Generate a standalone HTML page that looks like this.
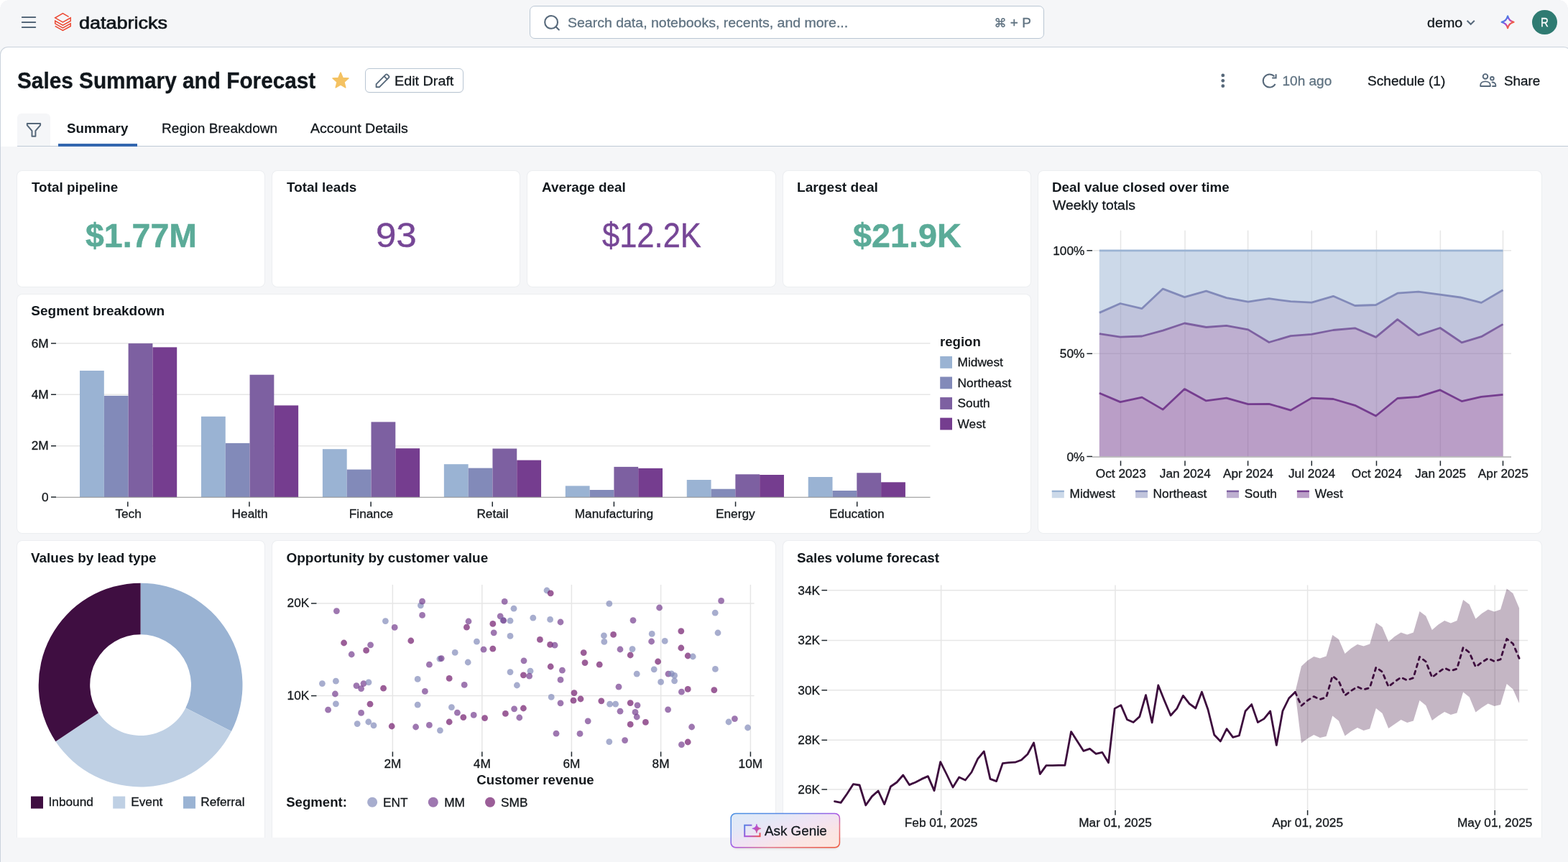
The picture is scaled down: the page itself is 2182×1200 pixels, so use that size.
<!DOCTYPE html>
<html lang="en"><head><meta charset="utf-8"><title>Sales Summary and Forecast</title>
<style>
html,body{margin:0;padding:0}
body{width:2182px;height:1200px;overflow:hidden;position:relative;background:#f5f6f8;font-family:"Liberation Sans",sans-serif;color:#11171c;-webkit-font-smoothing:antialiased}
.t{position:absolute;white-space:nowrap;margin:0;padding:0;display:block;transform-origin:0 50%;-webkit-text-stroke:.3px currentColor}
.t.b{-webkit-text-stroke:0}
.abs{position:absolute}
#root{position:absolute;left:0;top:0;width:2182px;height:1200px;overflow:hidden;will-change:transform}
#panel{position:absolute;left:0;top:65px;width:2187px;height:1140px;box-sizing:border-box;background:#fff;border:1px solid #cad2dc;border-bottom:0;border-radius:11px 11px 0 0}
#canvas{position:absolute;left:1px;top:204px;width:2181px;height:962px;background:#f5f6f8;overflow:hidden}
.card{position:absolute;background:#fff;border-radius:7px;box-shadow:0 0 0 1px #eceef1;overflow:hidden}
.card svg{position:absolute;left:0;top:0;display:block}
svg text{font-family:"Liberation Sans",sans-serif;fill:#14181c;stroke:#14181c;stroke-width:.3px}
svg text[font-weight]{stroke:none}
#search{position:absolute;left:737px;top:8px;width:716px;height:46px;box-sizing:border-box;background:#fff;border:1px solid #b9c6d3;border-radius:7px}
#edit{position:absolute;left:508px;top:95px;width:137px;height:34px;box-sizing:border-box;background:#fff;border:1px solid #b9c6d3;border-radius:6px;box-shadow:0 1px 1px rgba(0,0,0,.04)}
#filter{position:absolute;left:24px;top:158px;width:46px;height:45px;background:#f5f6f8;border-radius:6px 6px 0 0}
#tabline{position:absolute;left:24px;top:203px;width:2158px;height:1px;background:#bfcad6}
#tabsel{position:absolute;left:81px;top:200px;width:110px;height:4px;background:#3367af}
#avatar{position:absolute;left:2132.4px;top:13.7px;width:34.6px;height:34.6px;border-radius:50%;background:#2f7b72}
</style></head>
<body>
<div id="root">
<div id="topbar">
<div class="abs" style="left:0;top:0;width:12px;height:12px;background:radial-gradient(circle at 12px 12px,rgba(255,255,255,0) 11.5px,#fff 12px)"></div>
<div class="abs" style="left:2170px;top:0;width:12px;height:12px;background:radial-gradient(circle at 0 12px,rgba(255,255,255,0) 11.5px,#fff 12px)"></div>
<svg class="abs" style="left:28px;top:20px" width="24" height="22" viewBox="28 20 24 22"><g stroke="#56687a" stroke-width="2" stroke-linecap="round"><path d="M30.8 24h18.4M30.8 31.1h18.4M30.8 38.1h18.4"/></g></svg>
<svg class="abs" style="left:74px;top:16px" width="28" height="29" viewBox="74 16 28 29"><path d="M95.6 23.4L87.4 18.7L76.7 24.8L87.4 30.9L98.2 24.8V29.2L87.4 35.2L76.7 29.1V32.9L87.4 38.9L98.2 32.8V36.5L87.4 42.5L76.7 36.3" fill="none" stroke="#ec4630" stroke-width="1.45" stroke-linejoin="miter"/></svg>
<span class="t" style="left:109.77px;top:17px;font-size:24.5px;line-height:30px;color:#10161b;transform:scaleX(1.1025);-webkit-text-stroke:0.7px #10161b;">databricks</span>
<div id="search"></div>
<svg class="abs" style="left:754px;top:18px" width="28" height="28" viewBox="754 18 28 28"><g fill="none" stroke="#56687a" stroke-width="2.1" stroke-linecap="round"><circle cx="767.1" cy="30.9" r="8.9"/><path d="M773.6 37.3l4.2 4.2"/></g></svg>
<span class="t" style="left:789.52px;top:20px;font-size:19px;line-height:23px;color:#5f7281;transform:scaleX(1.0261);">Search data, notebooks, recents, and more...</span>
<span class="t" style="left:1383.5px;top:20px;font-size:19px;line-height:23px;color:#5f7281;"><span style="font-family:'DejaVu Sans',sans-serif;font-size:17px">⌘</span> + P</span>
<span class="t" style="left:1986.17px;top:20px;font-size:19px;line-height:23px;transform:scaleX(1.0360);">demo</span>
<svg class="abs" style="left:2038px;top:24px" width="18" height="14" viewBox="2038 24 18 14"><path d="M2041.6 28.7l5.1 5.1l5.1-5.1" fill="none" stroke="#56687a" stroke-width="2"/></svg>
<svg class="abs" style="left:2086px;top:18px" width="26" height="26" viewBox="2086 18 26 26"><defs><linearGradient id="sg" gradientUnits="userSpaceOnUse" x1="2093.85" y1="26.5" x2="2102.35" y2="35"><stop offset="0" stop-color="#4a80e2"/><stop offset=".25" stop-color="#6a62e2"/><stop offset=".5" stop-color="#ab44d8"/><stop offset=".72" stop-color="#dc4c7c"/><stop offset="1" stop-color="#f2603e"/></linearGradient></defs>
<path d="M2098.1 22.3C2099.6 27.45 2101.4 29.25 2106.55 30.75C2101.4 32.25 2099.6 34.05 2098.1 39.2C2096.6 34.05 2094.8 32.25 2089.65 30.75C2094.8 29.25 2096.6 27.45 2098.1 22.3Z" fill="none" stroke="url(#sg)" stroke-width="2.2" stroke-linejoin="round"/></svg>
<div id="avatar"></div>
<span class="t" style="left:2144.17px;top:21px;font-size:17px;line-height:21px;color:#ffffff;transform:scaleX(0.8814);">R</span>
</div>
<div id="panel"></div>
<div id="header">
<span class="t b" style="left:23.77px;top:93px;font-size:31.5px;line-height:38px;font-weight:700;transform:scaleX(0.9450);-webkit-text-stroke:.35px #11171c;">Sales Summary and Forecast</span>
<svg class="abs" style="left:460px;top:98px" width="28" height="28" viewBox="460 98 28 28"><polygon points="474,101 477.06,108.39 485.03,109.02 478.95,114.21 480.82,121.98 474,117.8 467.18,121.98 469.05,114.21 462.97,109.02 470.94,108.39" fill="#f4c262" stroke="#f4c262" stroke-width="1.5" stroke-linejoin="round"/></svg>
<div id="edit"></div>
<svg class="abs" style="left:520px;top:100px" width="26" height="26" viewBox="520 100 26 26"><g fill="none" stroke="#56687a" stroke-width="1.9" stroke-linejoin="round" stroke-linecap="round"><path d="M523.6 121.3v-4.2l13.2-13.2a1.6 1.6 0 0 1 2.3 0l1.9 1.9a1.6 1.6 0 0 1 0 2.3l-13.2 13.2z"/><path d="M534.6 106.2l4.2 4.2"/></g></svg>
<span class="t" style="left:549.08px;top:101px;font-size:19px;line-height:23px;transform:scaleX(1.0400);">Edit Draft</span>
<svg class="abs" style="left:1696px;top:100px" width="12" height="24" viewBox="1696 100 12 24"><g fill="#56687a"><circle cx="1701.8" cy="104.9" r="2.4"/><circle cx="1701.8" cy="112.3" r="2.4"/><circle cx="1701.8" cy="119.7" r="2.4"/></g></svg>
<svg class="abs" style="left:1753px;top:99px" width="27" height="27" viewBox="1753 99 27 27"><g fill="none" stroke="#56687a" stroke-width="2" stroke-linecap="butt"><path d="M1774.6 117.0a9 9 0 1 1 -1.3 -10.6"/><path d="M1775.6 103.2v5.4h-5.4"/></g></svg>
<span class="t" style="left:1784.56px;top:101px;font-size:19px;line-height:23px;color:#5f7281;">10h ago</span>
<span class="t" style="left:1902.54px;top:101px;font-size:19px;line-height:23px;transform:scaleX(1.0057);">Schedule (1)</span>
<svg class="abs" style="left:2057px;top:100px" width="28" height="24" viewBox="2057 100 28 24"><g fill="none" stroke="#56687a" stroke-width="1.9" stroke-linejoin="round"><circle cx="2067" cy="106.4" r="3.3"/><path d="M2060.2 120.0v-1.6c0-3 3-5 6.8-5s6.8 2 6.8 5v1.6z"/><circle cx="2076.4" cy="109.3" r="2.3"/><path d="M2075.8 114.6c3.4-.3 5.5 1.4 5.5 3.9v1.5h-5"/></g></svg>
<span class="t" style="left:2093.35px;top:101px;font-size:19px;line-height:23px;transform:scaleX(0.9917);">Share</span>
<div id="filter"></div>
<svg class="abs" style="left:34px;top:168px" width="26" height="26" viewBox="34 168 26 26"><path d="M37.8 172h18.3v2.3l-6.7 7.9v7.5h-4.9v-7.5l-6.7-7.9z" fill="none" stroke="#56687a" stroke-width="2" stroke-linejoin="round"/></svg>
<div id="tabline"></div><div id="tabsel"></div>
<span class="t b" style="left:92.98px;top:167px;font-size:19px;line-height:23px;font-weight:700;transform:scaleX(0.9853);">Summary</span>
<span class="t" style="left:225.04px;top:167px;font-size:19px;line-height:23px;transform:scaleX(1.0040);">Region Breakdown</span>
<span class="t" style="left:432.06px;top:167px;font-size:19px;line-height:23px;transform:scaleX(1.0291);">Account Details</span>
</div>
<div id="canvas">
<div class="card" style="left:23px;top:34px;width:344px;height:161px">
<span class="t b" style="left:19.69px;top:11px;font-size:19px;line-height:23px;font-weight:700;transform:scaleX(0.9926);">Total pipeline</span>
<span class="t b" style="left:94.9px;top:61px;font-size:47px;line-height:57px;font-weight:700;color:#5bab98;transform:scaleX(0.9886);-webkit-text-stroke:0.5px #5bab98;">$1.77M</span>
</div>
<div class="card" style="left:378px;top:34px;width:344px;height:161px">
<span class="t b" style="left:20.19px;top:11px;font-size:19px;line-height:23px;font-weight:700;transform:scaleX(0.9931);">Total leads</span>
<span class="t" style="left:143.55px;top:61px;font-size:47.5px;line-height:57px;color:#764696;transform:scaleX(1.0741);-webkit-text-stroke:0.4px #764696;">93</span>
</div>
<div class="card" style="left:733px;top:34px;width:345px;height:161px">
<span class="t b" style="left:20.45px;top:11px;font-size:19px;line-height:23px;font-weight:700;transform:scaleX(0.9922);">Average deal</span>
<span class="t" style="left:104.37px;top:61px;font-size:47.5px;line-height:57px;color:#764696;transform:scaleX(0.9154);-webkit-text-stroke:0.4px #764696;">$12.2K</span>
</div>
<div class="card" style="left:1089px;top:34px;width:344px;height:161px">
<span class="t b" style="left:18.74px;top:11px;font-size:19px;line-height:23px;font-weight:700;transform:scaleX(1.0087);">Largest deal</span>
<span class="t b" style="left:97.29px;top:61px;font-size:47px;line-height:57px;font-weight:700;color:#5bab98;transform:scaleX(0.9946);-webkit-text-stroke:0.5px #5bab98;">$21.9K</span>
</div>
<div class="card" style="left:23px;top:206px;width:1410px;height:332px">
<span class="t b" style="left:19.37px;top:11px;font-size:19px;line-height:23px;font-weight:700;">Segment breakdown</span>
<svg width="1410" height="332" viewBox="24 410 1410 332">
<path d="M78.0 477.9H1294.5" stroke="#e6e6e6" stroke-width="1.5"/><path d="M78.0 549.3H1294.5" stroke="#e6e6e6" stroke-width="1.5"/><path d="M78.0 620.7H1294.5" stroke="#e6e6e6" stroke-width="1.5"/><rect x="111" y="516" width="33.8" height="176" fill="#9ab3d3"/><rect x="144.8" y="550.9" width="33.8" height="141.1" fill="#828ab9"/><rect x="178.6" y="478.1" width="33.8" height="213.9" fill="#7d60a1"/><rect x="212.4" y="483.4" width="33.8" height="208.6" fill="#753d8f"/><rect x="279.95" y="579.8" width="33.8" height="112.2" fill="#9ab3d3"/><rect x="313.75" y="616.9" width="33.8" height="75.1" fill="#828ab9"/><rect x="347.55" y="521.7" width="33.8" height="170.3" fill="#7d60a1"/><rect x="381.35" y="564.4" width="33.8" height="127.6" fill="#753d8f"/><rect x="448.9" y="625.2" width="33.8" height="66.8" fill="#9ab3d3"/><rect x="482.7" y="653.6" width="33.8" height="38.4" fill="#828ab9"/><rect x="516.5" y="587.4" width="33.8" height="104.6" fill="#7d60a1"/><rect x="550.3" y="624.2" width="33.8" height="67.8" fill="#753d8f"/><rect x="617.85" y="646.2" width="33.8" height="45.8" fill="#9ab3d3"/><rect x="651.65" y="651.6" width="33.8" height="40.4" fill="#828ab9"/><rect x="685.45" y="624.5" width="33.8" height="67.5" fill="#7d60a1"/><rect x="719.25" y="640.6" width="33.8" height="51.4" fill="#753d8f"/><rect x="786.8" y="676.4" width="33.8" height="15.6" fill="#9ab3d3"/><rect x="820.6" y="682" width="33.8" height="10" fill="#828ab9"/><rect x="854.4" y="649.9" width="33.8" height="42.1" fill="#7d60a1"/><rect x="888.2" y="651.9" width="33.8" height="40.1" fill="#753d8f"/><rect x="955.75" y="668" width="33.8" height="24" fill="#9ab3d3"/><rect x="989.55" y="680.7" width="33.8" height="11.3" fill="#828ab9"/><rect x="1023.35" y="660.3" width="33.8" height="31.7" fill="#7d60a1"/><rect x="1057.15" y="661" width="33.8" height="31" fill="#753d8f"/><rect x="1124.7" y="664" width="33.8" height="28" fill="#9ab3d3"/><rect x="1158.5" y="683" width="33.8" height="9" fill="#828ab9"/><rect x="1192.3" y="658.3" width="33.8" height="33.7" fill="#7d60a1"/><rect x="1226.1" y="671.3" width="33.8" height="20.7" fill="#753d8f"/><path d="M78.0 692.2H1294.5" stroke="#8e8e8e" stroke-width="1.15"/><path d="M71 477.9H78" stroke="#1f272d" stroke-width="1.5"/><text x="67.6" y="483.5" font-size="17.25" text-anchor="end">6M</text><path d="M71 549.3H78" stroke="#1f272d" stroke-width="1.5"/><text x="67.6" y="554.9" font-size="17.25" text-anchor="end">4M</text><path d="M71 620.7H78" stroke="#1f272d" stroke-width="1.5"/><text x="67.6" y="626.3" font-size="17.25" text-anchor="end">2M</text><path d="M71 692.0H78" stroke="#1f272d" stroke-width="1.5"/><text x="67.6" y="697.6" font-size="17.25" text-anchor="end">0</text><path d="M177.8 698.4V705.2" stroke="#1f272d" stroke-width="1.5"/><text x="178.6" y="721.4" font-size="17.25" text-anchor="middle">Tech</text><path d="M346.95 698.4V705.2" stroke="#1f272d" stroke-width="1.5"/><text x="347.55" y="721.4" font-size="17.25" text-anchor="middle">Health</text><path d="M516.1 698.4V705.2" stroke="#1f272d" stroke-width="1.5"/><text x="516.5" y="721.4" font-size="17.25" text-anchor="middle">Finance</text><path d="M685.25 698.4V705.2" stroke="#1f272d" stroke-width="1.5"/><text x="685.45" y="721.4" font-size="17.25" text-anchor="middle">Retail</text><path d="M854.4 698.4V705.2" stroke="#1f272d" stroke-width="1.5"/><text x="854.4" y="721.4" font-size="17.25" text-anchor="middle">Manufacturing</text><path d="M1023.55 698.4V705.2" stroke="#1f272d" stroke-width="1.5"/><text x="1023.35" y="721.4" font-size="17.25" text-anchor="middle">Energy</text><path d="M1192.7 698.4V705.2" stroke="#1f272d" stroke-width="1.5"/><text x="1192.3" y="721.4" font-size="17.25" text-anchor="middle">Education</text><text x="1308" y="482" font-size="18.6" font-weight="bold">region</text><rect x="1308.2" y="496" width="16.8" height="16.8" fill="#9ab3d3"/><text x="1332.6" y="510.1" font-size="17.25">Midwest</text><rect x="1308.2" y="524.55" width="16.8" height="16.8" fill="#828ab9"/><text x="1332.6" y="538.65" font-size="17.25">Northeast</text><rect x="1308.2" y="553.1" width="16.8" height="16.8" fill="#7d60a1"/><text x="1332.6" y="567.2" font-size="17.25">South</text><rect x="1308.2" y="581.65" width="16.8" height="16.8" fill="#753d8f"/><text x="1332.6" y="595.75" font-size="17.25">West</text>
</svg>
</div>
<div class="card" style="left:1444px;top:34px;width:700px;height:504px">
<span class="t b" style="left:19.36px;top:11px;font-size:19px;line-height:23px;font-weight:700;transform:scaleX(0.9898);">Deal value closed over time</span>
<span class="t" style="left:20.02px;top:36px;font-size:19px;line-height:23px;transform:scaleX(1.0199);">Weekly totals</span>
<svg width="700" height="504" viewBox="1445 238 700 504">
<path d="M1520 348.8H2103.0" stroke="#e6e6e6" stroke-width="1.5"/><path d="M1520 492.3H2103.0" stroke="#e6e6e6" stroke-width="1.5"/><path d="M1559.5 320.7V635.5" stroke="#e6e6e6" stroke-width="1.5"/><path d="M1649 320.7V635.5" stroke="#e6e6e6" stroke-width="1.5"/><path d="M1736.6 320.7V635.5" stroke="#e6e6e6" stroke-width="1.5"/><path d="M1825.3 320.7V635.5" stroke="#e6e6e6" stroke-width="1.5"/><path d="M1915.5 320.7V635.5" stroke="#e6e6e6" stroke-width="1.5"/><path d="M2004.4 320.7V635.5" stroke="#e6e6e6" stroke-width="1.5"/><path d="M2091.5 320.7V635.5" stroke="#e6e6e6" stroke-width="1.5"/><polygon points="1529.85,348.8 1559,348.8 1589.12,348.8 1618.27,348.8 1648.4,348.8 1678.52,348.8 1706.7,348.8 1736.82,348.8 1765.97,348.8 1796.09,348.8 1825.25,348.8 1855.37,348.8 1885.49,348.8 1914.64,348.8 1944.76,348.8 1973.92,348.8 2004.04,348.8 2034.16,348.8 2061.37,348.8 2091.49,348.8 2091.49,403.8 2061.37,421.4 2034.16,414.3 2004.04,410.2 1973.92,406.1 1944.76,408.2 1914.64,424.5 1885.49,425.5 1855.37,412.3 1825.25,421.1 1796.09,419.7 1765.97,415.7 1736.82,420.1 1706.7,414.6 1678.52,405.1 1648.4,413.6 1618.27,402.1 1589.12,429.6 1559,422.5 1529.85,435.4" fill="#9ab3d3" fill-opacity=".5"/><polygon points="1529.85,435.4 1559,422.5 1589.12,429.6 1618.27,402.1 1648.4,413.6 1678.52,405.1 1706.7,414.6 1736.82,420.1 1765.97,415.7 1796.09,419.7 1825.25,421.1 1855.37,412.3 1885.49,425.5 1914.64,424.5 1944.76,408.2 1973.92,406.1 2004.04,410.2 2034.16,414.3 2061.37,421.4 2091.49,403.8 2091.49,451.4 2061.37,468.7 2034.16,476.9 2004.04,456.5 1973.92,466.7 1944.76,444.6 1914.64,469.4 1885.49,456.8 1855.37,459.5 1825.25,465.3 1796.09,467.7 1765.97,476.5 1736.82,458.9 1706.7,453.4 1678.52,455.5 1648.4,450 1618.27,460.2 1589.12,468 1559,469.1 1529.85,464.6" fill="#828ab9" fill-opacity=".5"/><polygon points="1529.85,464.6 1559,469.1 1589.12,468 1618.27,460.2 1648.4,450 1678.52,455.5 1706.7,453.4 1736.82,458.9 1765.97,476.5 1796.09,467.7 1825.25,465.3 1855.37,459.5 1885.49,456.8 1914.64,469.4 1944.76,444.6 1973.92,466.7 2004.04,456.5 2034.16,476.9 2061.37,468.7 2091.49,451.4 2091.49,549.4 2061.37,552.4 2034.16,558.6 2004.04,542.9 1973.92,552.4 1944.76,554.5 1914.64,579 1885.49,564.3 1855.37,555.5 1825.25,554.1 1796.09,571.1 1765.97,562.3 1736.82,562.6 1706.7,554.1 1678.52,557.9 1648.4,541.6 1618.27,570.1 1589.12,553.1 1559,559.6 1529.85,547.3" fill="#7d60a1" fill-opacity=".5"/><polygon points="1529.85,547.3 1559,559.6 1589.12,553.1 1618.27,570.1 1648.4,541.6 1678.52,557.9 1706.7,554.1 1736.82,562.6 1765.97,562.3 1796.09,571.1 1825.25,554.1 1855.37,555.5 1885.49,564.3 1914.64,579 1944.76,554.5 1973.92,552.4 2004.04,542.9 2034.16,558.6 2061.37,552.4 2091.49,549.4 2091.49,635.5 2061.37,635.5 2034.16,635.5 2004.04,635.5 1973.92,635.5 1944.76,635.5 1914.64,635.5 1885.49,635.5 1855.37,635.5 1825.25,635.5 1796.09,635.5 1765.97,635.5 1736.82,635.5 1706.7,635.5 1678.52,635.5 1648.4,635.5 1618.27,635.5 1589.12,635.5 1559,635.5 1529.85,635.5" fill="#753d8f" fill-opacity=".5"/><path d="M1529.85 348.8L1559 348.8L1589.12 348.8L1618.27 348.8L1648.4 348.8L1678.52 348.8L1706.7 348.8L1736.82 348.8L1765.97 348.8L1796.09 348.8L1825.25 348.8L1855.37 348.8L1885.49 348.8L1914.64 348.8L1944.76 348.8L1973.92 348.8L2004.04 348.8L2034.16 348.8L2061.37 348.8L2091.49 348.8" fill="none" stroke="#9ab3d3" stroke-width="2.8" stroke-linejoin="round"/><path d="M1529.85 435.4L1559 422.5L1589.12 429.6L1618.27 402.1L1648.4 413.6L1678.52 405.1L1706.7 414.6L1736.82 420.1L1765.97 415.7L1796.09 419.7L1825.25 421.1L1855.37 412.3L1885.49 425.5L1914.64 424.5L1944.76 408.2L1973.92 406.1L2004.04 410.2L2034.16 414.3L2061.37 421.4L2091.49 403.8" fill="none" stroke="#828ab9" stroke-width="2.8" stroke-linejoin="round"/><path d="M1529.85 464.6L1559 469.1L1589.12 468L1618.27 460.2L1648.4 450L1678.52 455.5L1706.7 453.4L1736.82 458.9L1765.97 476.5L1796.09 467.7L1825.25 465.3L1855.37 459.5L1885.49 456.8L1914.64 469.4L1944.76 444.6L1973.92 466.7L2004.04 456.5L2034.16 476.9L2061.37 468.7L2091.49 451.4" fill="none" stroke="#7d60a1" stroke-width="2.8" stroke-linejoin="round"/><path d="M1529.85 547.3L1559 559.6L1589.12 553.1L1618.27 570.1L1648.4 541.6L1678.52 557.9L1706.7 554.1L1736.82 562.6L1765.97 562.3L1796.09 571.1L1825.25 554.1L1855.37 555.5L1885.49 564.3L1914.64 579L1944.76 554.5L1973.92 552.4L2004.04 542.9L2034.16 558.6L2061.37 552.4L2091.49 549.4" fill="none" stroke="#753d8f" stroke-width="2.8" stroke-linejoin="round"/><path d="M1520 636.1H2103.0" stroke="#a2a2a2" stroke-width="1.4"/><path d="M1512.4 348.8H1520" stroke="#1f272d" stroke-width="1.5"/><text x="1509.4" y="354.8" font-size="17.25" text-anchor="end">100%</text><path d="M1512.4 492.3H1520" stroke="#1f272d" stroke-width="1.5"/><text x="1509.4" y="498.3" font-size="17.25" text-anchor="end">50%</text><path d="M1512.4 635.5H1520" stroke="#1f272d" stroke-width="1.5"/><text x="1509.4" y="641.5" font-size="17.25" text-anchor="end">0%</text><path d="M1559.5 641.5V648.5" stroke="#1f272d" stroke-width="1.5"/><text x="1559.8" y="664.9" font-size="17.25" text-anchor="middle">Oct 2023</text><path d="M1649 641.5V648.5" stroke="#1f272d" stroke-width="1.5"/><text x="1649.3" y="664.9" font-size="17.25" text-anchor="middle">Jan 2024</text><path d="M1736.6 641.5V648.5" stroke="#1f272d" stroke-width="1.5"/><text x="1736.9" y="664.9" font-size="17.25" text-anchor="middle">Apr 2024</text><path d="M1825.3 641.5V648.5" stroke="#1f272d" stroke-width="1.5"/><text x="1825.6" y="664.9" font-size="17.25" text-anchor="middle">Jul 2024</text><path d="M1915.5 641.5V648.5" stroke="#1f272d" stroke-width="1.5"/><text x="1915.8" y="664.9" font-size="17.25" text-anchor="middle">Oct 2024</text><path d="M2004.4 641.5V648.5" stroke="#1f272d" stroke-width="1.5"/><text x="2004.7" y="664.9" font-size="17.25" text-anchor="middle">Jan 2025</text><path d="M2091.5 641.5V648.5" stroke="#1f272d" stroke-width="1.5"/><text x="2091.8" y="664.9" font-size="17.25" text-anchor="middle">Apr 2025</text><rect x="1463.8" y="682.7" width="17" height="10.5" fill="#9ab3d3" fill-opacity=".5"/><path d="M1463.8 683.9h17" stroke="#9ab3d3" stroke-width="2.4"/><text x="1488.6" y="692.8" font-size="17.25">Midwest</text><rect x="1580.1" y="682.7" width="17" height="10.5" fill="#828ab9" fill-opacity=".5"/><path d="M1580.1 683.9h17" stroke="#828ab9" stroke-width="2.4"/><text x="1604.6" y="692.8" font-size="17.25">Northeast</text><rect x="1707.0" y="682.7" width="17" height="10.5" fill="#7d60a1" fill-opacity=".5"/><path d="M1707.0 683.9h17" stroke="#7d60a1" stroke-width="2.4"/><text x="1731.8" y="692.8" font-size="17.25">South</text><rect x="1804.9" y="682.7" width="17" height="10.5" fill="#753d8f" fill-opacity=".5"/><path d="M1804.9 683.9h17" stroke="#753d8f" stroke-width="2.4"/><text x="1829.7" y="692.8" font-size="17.25">West</text>
</svg>
</div>
<div class="card" style="left:23px;top:549px;width:344px;height:420px">
<span class="t b" style="left:19.49px;top:12px;font-size:19px;line-height:23px;font-weight:700;transform:scaleX(0.9958);">Values by lead type</span>
<svg width="344" height="420" viewBox="24 753 344 420">
<path d="M195.6 811.7A141.9 141.9 0 0 1 322.03 1018.02L258.33 985.56A70.4 70.4 0 0 0 195.6 883.2Z" fill="#9ab3d3"/><path d="M322.03 1018.02A141.9 141.9 0 0 1 77.41 1032.13L136.96 992.56A70.4 70.4 0 0 0 258.33 985.56Z" fill="#bfd0e4"/><path d="M77.41 1032.13A141.9 141.9 0 0 1 195.6 811.7L195.6 883.2A70.4 70.4 0 0 0 136.96 992.56Z" fill="#3f0e41"/><rect x="43.0" y="1108.6" width="17" height="17" fill="#3f0e41"/><text x="67.5" y="1122.4" font-size="17.25">Inbound</text><rect x="157.2" y="1108.6" width="17" height="17" fill="#bfd0e4"/><text x="182.2" y="1122.4" font-size="17.25">Event</text><rect x="255.0" y="1108.6" width="17" height="17" fill="#9ab3d3"/><text x="279.2" y="1122.4" font-size="17.25">Referral</text>
</svg>
</div>
<div class="card" style="left:378px;top:549px;width:700px;height:420px">
<span class="t b" style="left:19.42px;top:12px;font-size:19px;line-height:23px;font-weight:700;">Opportunity by customer value</span>
<svg width="700" height="420" viewBox="379 753 700 420">
<path d="M546.4 814V1046.5" stroke="#e6e6e6" stroke-width="1.5"/><path d="M670.8 814V1046.5" stroke="#e6e6e6" stroke-width="1.5"/><path d="M795.4 814V1046.5" stroke="#e6e6e6" stroke-width="1.5"/><path d="M919.6 814V1046.5" stroke="#e6e6e6" stroke-width="1.5"/><path d="M1044.4 814V1046.5" stroke="#e6e6e6" stroke-width="1.5"/><path d="M440.5 840.0H1049.6" stroke="#e6e6e6" stroke-width="1.5"/><path d="M440.5 968.6H1049.6" stroke="#e6e6e6" stroke-width="1.5"/><circle cx="448.4" cy="951.6" r="4.4" fill="#828ab9" fill-opacity=".7"/><circle cx="467.4" cy="948.2" r="4.4" fill="#828ab9" fill-opacity=".7"/><circle cx="468.4" cy="850.6" r="4.4" fill="#753d8f" fill-opacity=".7"/><circle cx="466.4" cy="966" r="4.4" fill="#753d8f" fill-opacity=".7"/><circle cx="467.4" cy="979.8" r="4.4" fill="#828ab9" fill-opacity=".7"/><circle cx="456.6" cy="988.2" r="4.4" fill="#753d8f" fill-opacity=".7"/><circle cx="478.6" cy="895" r="4.4" fill="#701a6c" fill-opacity=".7"/><circle cx="489.2" cy="911" r="4.4" fill="#753d8f" fill-opacity=".7"/><circle cx="496" cy="954.6" r="4.4" fill="#753d8f" fill-opacity=".7"/><circle cx="502.6" cy="958.6" r="4.4" fill="#753d8f" fill-opacity=".7"/><circle cx="506" cy="951.6" r="4.4" fill="#753d8f" fill-opacity=".7"/><circle cx="513" cy="949.8" r="4.4" fill="#828ab9" fill-opacity=".7"/><circle cx="509.6" cy="905.4" r="4.4" fill="#701a6c" fill-opacity=".7"/><circle cx="515.6" cy="897.8" r="4.4" fill="#753d8f" fill-opacity=".7"/><circle cx="515" cy="980.2" r="4.4" fill="#701a6c" fill-opacity=".7"/><circle cx="502.6" cy="992.4" r="4.4" fill="#753d8f" fill-opacity=".7"/><circle cx="497.2" cy="1007.6" r="4.4" fill="#828ab9" fill-opacity=".7"/><circle cx="512.8" cy="1005" r="4.4" fill="#828ab9" fill-opacity=".7"/><circle cx="520" cy="1009.8" r="4.4" fill="#828ab9" fill-opacity=".7"/><circle cx="533.6" cy="958.2" r="4.4" fill="#701a6c" fill-opacity=".7"/><circle cx="536.4" cy="864.6" r="4.4" fill="#828ab9" fill-opacity=".7"/><circle cx="549.2" cy="873.4" r="4.4" fill="#753d8f" fill-opacity=".7"/><circle cx="545.2" cy="1011" r="4.4" fill="#701a6c" fill-opacity=".7"/><circle cx="571.8" cy="892" r="4.4" fill="#701a6c" fill-opacity=".7"/><circle cx="585.4" cy="842.8" r="4.4" fill="#828ab9" fill-opacity=".7"/><circle cx="587.6" cy="837.2" r="4.4" fill="#753d8f" fill-opacity=".7"/><circle cx="587.6" cy="856.4" r="4.4" fill="#753d8f" fill-opacity=".7"/><circle cx="581.2" cy="945.4" r="4.4" fill="#828ab9" fill-opacity=".7"/><circle cx="581.2" cy="981.2" r="4.4" fill="#828ab9" fill-opacity=".7"/><circle cx="591.4" cy="962.4" r="4.4" fill="#753d8f" fill-opacity=".7"/><circle cx="578.6" cy="1012" r="4.4" fill="#753d8f" fill-opacity=".7"/><circle cx="597.4" cy="925.2" r="4.4" fill="#753d8f" fill-opacity=".7"/><circle cx="597.4" cy="1009.4" r="4.4" fill="#753d8f" fill-opacity=".7"/><circle cx="612" cy="917.2" r="4.4" fill="#828ab9" fill-opacity=".7"/><circle cx="614.2" cy="916.6" r="4.4" fill="#753d8f" fill-opacity=".7"/><circle cx="612.4" cy="1016.8" r="4.4" fill="#828ab9" fill-opacity=".7"/><circle cx="625.2" cy="944.4" r="4.4" fill="#701a6c" fill-opacity=".7"/><circle cx="625.2" cy="1005" r="4.4" fill="#701a6c" fill-opacity=".7"/><circle cx="628.4" cy="984.6" r="4.4" fill="#828ab9" fill-opacity=".7"/><circle cx="633.2" cy="908.4" r="4.4" fill="#828ab9" fill-opacity=".7"/><circle cx="636.4" cy="992.2" r="4.4" fill="#753d8f" fill-opacity=".7"/><circle cx="644.8" cy="998.6" r="4.4" fill="#701a6c" fill-opacity=".7"/><circle cx="646.2" cy="953.4" r="4.4" fill="#753d8f" fill-opacity=".7"/><circle cx="651.2" cy="922" r="4.4" fill="#828ab9" fill-opacity=".7"/><circle cx="649.4" cy="873.2" r="4.4" fill="#701a6c" fill-opacity=".7"/><circle cx="652" cy="865" r="4.4" fill="#753d8f" fill-opacity=".7"/><circle cx="659.2" cy="995.4" r="4.4" fill="#753d8f" fill-opacity=".7"/><circle cx="663.4" cy="893.2" r="4.4" fill="#828ab9" fill-opacity=".7"/><circle cx="673" cy="904.2" r="4.4" fill="#753d8f" fill-opacity=".7"/><circle cx="674.6" cy="999.6" r="4.4" fill="#701a6c" fill-opacity=".7"/><circle cx="685.8" cy="868.4" r="4.4" fill="#701a6c" fill-opacity=".7"/><circle cx="685.8" cy="903.2" r="4.4" fill="#701a6c" fill-opacity=".7"/><circle cx="687.2" cy="880.8" r="4.4" fill="#753d8f" fill-opacity=".7"/><circle cx="696.2" cy="857.8" r="4.4" fill="#753d8f" fill-opacity=".7"/><circle cx="700" cy="863.4" r="4.4" fill="#828ab9" fill-opacity=".7"/><circle cx="700.8" cy="863.8" r="4.4" fill="#753d8f" fill-opacity=".7"/><circle cx="702.2" cy="837.4" r="4.4" fill="#753d8f" fill-opacity=".7"/><circle cx="703.4" cy="993.4" r="4.4" fill="#701a6c" fill-opacity=".7"/><circle cx="710" cy="864.2" r="4.4" fill="#828ab9" fill-opacity=".7"/><circle cx="710" cy="885.4" r="4.4" fill="#828ab9" fill-opacity=".7"/><circle cx="710" cy="935.6" r="4.4" fill="#828ab9" fill-opacity=".7"/><circle cx="715" cy="847.2" r="4.4" fill="#828ab9" fill-opacity=".7"/><circle cx="715.6" cy="986.8" r="4.4" fill="#753d8f" fill-opacity=".7"/><circle cx="719.4" cy="954" r="4.4" fill="#828ab9" fill-opacity=".7"/><circle cx="722.8" cy="999" r="4.4" fill="#753d8f" fill-opacity=".7"/><circle cx="728.4" cy="939.8" r="4.4" fill="#701a6c" fill-opacity=".7"/><circle cx="728.4" cy="986" r="4.4" fill="#701a6c" fill-opacity=".7"/><circle cx="729" cy="919.8" r="4.4" fill="#753d8f" fill-opacity=".7"/><circle cx="738" cy="934.2" r="4.4" fill="#828ab9" fill-opacity=".7"/><circle cx="736.6" cy="941.2" r="4.4" fill="#753d8f" fill-opacity=".7"/><circle cx="741.8" cy="860.2" r="4.4" fill="#828ab9" fill-opacity=".7"/><circle cx="751.4" cy="890.4" r="4.4" fill="#701a6c" fill-opacity=".7"/><circle cx="761" cy="822" r="4.4" fill="#828ab9" fill-opacity=".7"/><circle cx="766.2" cy="825.8" r="4.4" fill="#701a6c" fill-opacity=".7"/><circle cx="765.6" cy="862.4" r="4.4" fill="#828ab9" fill-opacity=".7"/><circle cx="765.6" cy="897.4" r="4.4" fill="#701a6c" fill-opacity=".7"/><circle cx="772" cy="898.2" r="4.4" fill="#753d8f" fill-opacity=".7"/><circle cx="766.2" cy="928" r="4.4" fill="#701a6c" fill-opacity=".7"/><circle cx="767.2" cy="970.4" r="4.4" fill="#828ab9" fill-opacity=".7"/><circle cx="774" cy="1021.2" r="4.4" fill="#753d8f" fill-opacity=".7"/><circle cx="780" cy="866" r="4.4" fill="#753d8f" fill-opacity=".7"/><circle cx="780" cy="946.4" r="4.4" fill="#753d8f" fill-opacity=".7"/><circle cx="782.4" cy="933.2" r="4.4" fill="#753d8f" fill-opacity=".7"/><circle cx="780" cy="978.8" r="4.4" fill="#753d8f" fill-opacity=".7"/><circle cx="799" cy="964.6" r="4.4" fill="#701a6c" fill-opacity=".7"/><circle cx="798" cy="975.2" r="4.4" fill="#701a6c" fill-opacity=".7"/><circle cx="808" cy="973" r="4.4" fill="#701a6c" fill-opacity=".7"/><circle cx="807" cy="1021.4" r="4.4" fill="#753d8f" fill-opacity=".7"/><circle cx="812.2" cy="908.6" r="4.4" fill="#701a6c" fill-opacity=".7"/><circle cx="814" cy="922.6" r="4.4" fill="#701a6c" fill-opacity=".7"/><circle cx="818.2" cy="1003.8" r="4.4" fill="#753d8f" fill-opacity=".7"/><circle cx="834.2" cy="925.2" r="4.4" fill="#701a6c" fill-opacity=".7"/><circle cx="836.8" cy="975.8" r="4.4" fill="#701a6c" fill-opacity=".7"/><circle cx="840.4" cy="884.8" r="4.4" fill="#828ab9" fill-opacity=".7"/><circle cx="840.8" cy="893.4" r="4.4" fill="#828ab9" fill-opacity=".7"/><circle cx="847.8" cy="840.4" r="4.4" fill="#828ab9" fill-opacity=".7"/><circle cx="848.6" cy="980.2" r="4.4" fill="#828ab9" fill-opacity=".7"/><circle cx="856.6" cy="980.2" r="4.4" fill="#828ab9" fill-opacity=".7"/><circle cx="847.8" cy="1032.6" r="4.4" fill="#828ab9" fill-opacity=".7"/><circle cx="853.6" cy="883.4" r="4.4" fill="#701a6c" fill-opacity=".7"/><circle cx="861" cy="956.2" r="4.4" fill="#753d8f" fill-opacity=".7"/><circle cx="863" cy="904" r="4.4" fill="#753d8f" fill-opacity=".7"/><circle cx="863" cy="990.2" r="4.4" fill="#753d8f" fill-opacity=".7"/><circle cx="869.6" cy="1030.6" r="4.4" fill="#753d8f" fill-opacity=".7"/><circle cx="877.2" cy="912" r="4.4" fill="#701a6c" fill-opacity=".7"/><circle cx="877.2" cy="978.6" r="4.4" fill="#701a6c" fill-opacity=".7"/><circle cx="877.2" cy="1008.4" r="4.4" fill="#701a6c" fill-opacity=".7"/><circle cx="880" cy="903.6" r="4.4" fill="#828ab9" fill-opacity=".7"/><circle cx="881" cy="863.6" r="4.4" fill="#753d8f" fill-opacity=".7"/><circle cx="884" cy="991.4" r="4.4" fill="#753d8f" fill-opacity=".7"/><circle cx="886.2" cy="938.2" r="4.4" fill="#828ab9" fill-opacity=".7"/><circle cx="886.2" cy="998" r="4.4" fill="#753d8f" fill-opacity=".7"/><circle cx="887" cy="981.8" r="4.4" fill="#753d8f" fill-opacity=".7"/><circle cx="898.4" cy="1005.4" r="4.4" fill="#701a6c" fill-opacity=".7"/><circle cx="906.6" cy="893" r="4.4" fill="#753d8f" fill-opacity=".7"/><circle cx="907.2" cy="882.4" r="4.4" fill="#828ab9" fill-opacity=".7"/><circle cx="910.2" cy="931.8" r="4.4" fill="#828ab9" fill-opacity=".7"/><circle cx="915.6" cy="921" r="4.4" fill="#701a6c" fill-opacity=".7"/><circle cx="917.6" cy="846" r="4.4" fill="#753d8f" fill-opacity=".7"/><circle cx="919.6" cy="949.4" r="4.4" fill="#828ab9" fill-opacity=".7"/><circle cx="925.2" cy="892.4" r="4.4" fill="#828ab9" fill-opacity=".7"/><circle cx="929.6" cy="987.8" r="4.4" fill="#753d8f" fill-opacity=".7"/><circle cx="930" cy="938.2" r="4.4" fill="#753d8f" fill-opacity=".7"/><circle cx="934.4" cy="937.8" r="4.4" fill="#828ab9" fill-opacity=".7"/><circle cx="938.6" cy="940.4" r="4.4" fill="#828ab9" fill-opacity=".7"/><circle cx="938.6" cy="947.8" r="4.4" fill="#828ab9" fill-opacity=".7"/><circle cx="947.8" cy="878.6" r="4.4" fill="#701a6c" fill-opacity=".7"/><circle cx="947.8" cy="902" r="4.4" fill="#701a6c" fill-opacity=".7"/><circle cx="948.4" cy="963.2" r="4.4" fill="#753d8f" fill-opacity=".7"/><circle cx="948.4" cy="1036.6" r="4.4" fill="#753d8f" fill-opacity=".7"/><circle cx="957.2" cy="913" r="4.4" fill="#701a6c" fill-opacity=".7"/><circle cx="957.2" cy="959.4" r="4.4" fill="#701a6c" fill-opacity=".7"/><circle cx="957.2" cy="1033" r="4.4" fill="#701a6c" fill-opacity=".7"/><circle cx="962.6" cy="1012" r="4.4" fill="#753d8f" fill-opacity=".7"/><circle cx="964.2" cy="914" r="4.4" fill="#828ab9" fill-opacity=".7"/><circle cx="993.8" cy="960.6" r="4.4" fill="#701a6c" fill-opacity=".7"/><circle cx="995.2" cy="853.2" r="4.4" fill="#828ab9" fill-opacity=".7"/><circle cx="995.4" cy="931.4" r="4.4" fill="#828ab9" fill-opacity=".7"/><circle cx="999" cy="881" r="4.4" fill="#828ab9" fill-opacity=".7"/><circle cx="1003.6" cy="836.4" r="4.4" fill="#753d8f" fill-opacity=".7"/><circle cx="1014" cy="1005" r="4.4" fill="#828ab9" fill-opacity=".7"/><circle cx="1022.4" cy="1000.6" r="4.4" fill="#753d8f" fill-opacity=".7"/><circle cx="1040.6" cy="1013" r="4.4" fill="#828ab9" fill-opacity=".7"/><path d="M433 840.0H440.5" stroke="#1f272d" stroke-width="1.5"/><text x="430.3" y="845.2" font-size="17.25" text-anchor="end">20K</text><path d="M433 968.6H440.5" stroke="#1f272d" stroke-width="1.5"/><text x="430.3" y="973.8" font-size="17.25" text-anchor="end">10K</text><path d="M546.4 1046.5V1053.3" stroke="#1f272d" stroke-width="1.5"/><text x="546.4" y="1068.8" font-size="17.25" text-anchor="middle">2M</text><path d="M670.8 1046.5V1053.3" stroke="#1f272d" stroke-width="1.5"/><text x="670.8" y="1068.8" font-size="17.25" text-anchor="middle">4M</text><path d="M795.4 1046.5V1053.3" stroke="#1f272d" stroke-width="1.5"/><text x="795.4" y="1068.8" font-size="17.25" text-anchor="middle">6M</text><path d="M919.6 1046.5V1053.3" stroke="#1f272d" stroke-width="1.5"/><text x="919.6" y="1068.8" font-size="17.25" text-anchor="middle">8M</text><path d="M1044.4 1046.5V1053.3" stroke="#1f272d" stroke-width="1.5"/><text x="1044.4" y="1068.8" font-size="17.25" text-anchor="middle">10M</text><text x="745" y="1092" font-size="18.6" text-anchor="middle" font-weight="bold">Customer revenue</text><text x="398.2" y="1123" font-size="18.6" font-weight="bold">Segment:</text><circle cx="518.1" cy="1116.7" r="7" fill="#828ab9" fill-opacity=".7"/><text x="533.1" y="1122.8" font-size="17.25">ENT</text><circle cx="602.8" cy="1116.7" r="7" fill="#753d8f" fill-opacity=".7"/><text x="618.2" y="1122.8" font-size="17.25">MM</text><circle cx="682.0" cy="1116.7" r="7" fill="#701a6c" fill-opacity=".7"/><text x="697" y="1122.8" font-size="17.25">SMB</text>
</svg>
</div>
<div class="card" style="left:1089px;top:549px;width:1055px;height:420px">
<span class="t b" style="left:19.17px;top:12px;font-size:19px;line-height:23px;font-weight:700;transform:scaleX(0.9870);">Sales volume forecast</span>
<svg width="1055" height="420" viewBox="1090 753 1055 420">
<path d="M1309.6 814.4V1128" stroke="#e6e6e6" stroke-width="1.5"/><path d="M1552.0 814.4V1128" stroke="#e6e6e6" stroke-width="1.5"/><path d="M1819.6 814.4V1128" stroke="#e6e6e6" stroke-width="1.5"/><path d="M2080.2 814.4V1128" stroke="#e6e6e6" stroke-width="1.5"/><path d="M1151 821.7H2126" stroke="#e6e6e6" stroke-width="1.5"/><path d="M1151 891.5H2126" stroke="#e6e6e6" stroke-width="1.5"/><path d="M1151 960.8H2126" stroke="#e6e6e6" stroke-width="1.5"/><path d="M1151 1030.3H2126" stroke="#e6e6e6" stroke-width="1.5"/><path d="M1151 1099.0H2126" stroke="#e6e6e6" stroke-width="1.5"/><polygon points="1802.32,963.5 1810.98,927.4 1819.64,919.6 1828.3,914 1836.96,916.6 1845.62,913.4 1854.28,884 1862.94,890 1871.6,910 1880.26,902.6 1888.92,897 1897.58,899.6 1906.24,896.6 1914.9,867 1923.56,873 1932.22,893.4 1940.88,886 1949.54,880.4 1958.2,883.4 1966.86,880.4 1975.52,851 1984.18,857.4 1992.84,877 2001.5,869.6 2010.16,864 2018.82,867.4 2027.48,864 2036.14,835 2044.8,841.4 2053.46,861.6 2062.12,854 2070.78,848.6 2079.44,851.6 2088.1,848.6 2096.76,819.4 2105.42,826 2114.08,846.4 2114.08,979 2105.42,959.4 2096.76,952 2088.1,981 2079.44,983 2070.78,979.6 2062.12,985 2053.46,991.6 2044.8,970.6 2036.14,963.4 2027.48,992.6 2018.82,995 2010.16,991 2001.5,996.6 1992.84,1003 1984.18,982 1975.52,975 1966.86,1003.6 1958.2,1006 1949.54,1002 1940.88,1008 1932.22,1014 1923.56,993 1914.9,986 1906.24,1014.6 1897.58,1017 1888.92,1013 1880.26,1018 1871.6,1024.4 1862.94,1003.4 1854.28,996.4 1845.62,1025 1836.96,1027 1828.3,1023 1819.64,1028 1810.98,1034.4 1802.32,963.5" fill="#3d0c3d" fill-opacity=".3"/><path d="M1161.48 1115.6L1170.14 1117.4L1178.8 1105L1187.46 1091.6L1196.12 1093L1204.78 1121L1213.44 1108.6L1222.1 1101L1230.76 1119.6L1239.42 1095L1248.08 1089L1256.74 1079L1265.4 1092.6L1274.06 1089L1282.72 1084.4L1291.38 1080.6L1300.04 1100.6L1308.7 1060.6L1317.36 1078L1326.02 1096L1334.68 1082L1343.34 1086L1352 1075L1360.66 1056.4L1369.32 1046L1377.98 1084.4L1386.64 1087.6L1395.3 1062.6L1403.96 1061.6L1412.62 1061.2L1421.28 1058L1429.94 1050L1438.6 1034L1447.26 1077.6L1455.92 1065.6L1464.58 1065.6L1473.24 1065.4L1481.9 1065.4L1490.56 1018.6L1499.22 1032L1507.88 1045.4L1516.54 1042.4L1525.2 1049.4L1533.86 1047.4L1542.52 1061.8L1551.18 986.4L1559.84 981.6L1568.5 1001.8L1577.16 1005.5L1585.82 997.6L1594.48 967.6L1603.14 1006L1611.8 954L1620.46 975.6L1629.12 996L1637.78 986.4L1646.44 968.4L1655.1 979.6L1663.76 986L1672.42 963.2L1681.08 988L1689.74 1023L1698.4 1032L1707.06 1014.6L1715.72 1026.4L1724.38 1024L1733.04 990L1741.7 980.6L1750.36 1005.6L1759.02 1000.6L1767.68 990L1776.34 1037.4L1785 989.6L1793.66 972L1802.32 963.5" fill="none" stroke="#3d0c3d" stroke-width="2.8" stroke-linejoin="round" stroke-linecap="round"/><path d="M1802.32 963.5L1810.98 982.4L1819.64 975L1828.3 969.6L1836.96 973.6L1845.62 970.6L1854.28 941L1862.94 948L1871.6 968L1880.26 961.6L1888.92 956L1897.58 960L1906.24 957.4L1914.9 929L1923.56 935.4L1932.22 956L1940.88 949L1949.54 943L1958.2 947L1966.86 943.6L1975.52 914.4L1984.18 921L1992.84 943L2001.5 936L2010.16 930L2018.82 934L2027.48 931L2036.14 901.4L2044.8 908.4L2053.46 928.4L2062.12 922L2070.78 916.6L2079.44 920.6L2088.1 918L2096.76 889.4L2105.42 896L2114.08 916.4" fill="none" stroke="#3d0c3d" stroke-width="2.8" stroke-linejoin="round" stroke-linecap="round" stroke-dasharray="4.7 5.8"/><path d="M1143.4 821.7H1151" stroke="#1f272d" stroke-width="1.5"/><text x="1141" y="827.5" font-size="17.25" text-anchor="end">34K</text><path d="M1143.4 891.5H1151" stroke="#1f272d" stroke-width="1.5"/><text x="1141" y="897.3" font-size="17.25" text-anchor="end">32K</text><path d="M1143.4 960.8H1151" stroke="#1f272d" stroke-width="1.5"/><text x="1141" y="966.6" font-size="17.25" text-anchor="end">30K</text><path d="M1143.4 1030.3H1151" stroke="#1f272d" stroke-width="1.5"/><text x="1141" y="1036.1" font-size="17.25" text-anchor="end">28K</text><path d="M1143.4 1099.0H1151" stroke="#1f272d" stroke-width="1.5"/><text x="1141" y="1104.8" font-size="17.25" text-anchor="end">26K</text><path d="M1309.6 1128V1134.8" stroke="#1f272d" stroke-width="1.5"/><text x="1309.6" y="1150.6" font-size="17.25" text-anchor="middle">Feb 01, 2025</text><path d="M1552.0 1128V1134.8" stroke="#1f272d" stroke-width="1.5"/><text x="1552" y="1150.6" font-size="17.25" text-anchor="middle">Mar 01, 2025</text><path d="M1819.6 1128V1134.8" stroke="#1f272d" stroke-width="1.5"/><text x="1819.6" y="1150.6" font-size="17.25" text-anchor="middle">Apr 01, 2025</text><path d="M2080.2 1128V1134.8" stroke="#1f272d" stroke-width="1.5"/><text x="2080.2" y="1150.6" font-size="17.25" text-anchor="middle">May 01, 2025</text>
</svg>
</div>
</div>
<div class="abs" style="left:1px;top:1166px;width:2181px;height:34px;background:#f5f6f8"></div>
<svg class="abs" style="left:1008px;top:1124px;overflow:visible" width="170" height="66" viewBox="1008 1124 170 66"><defs>
<linearGradient id="gs" gradientUnits="userSpaceOnUse" x1="1079.2" y1="1112.3" x2="1106.8" y2="1199.7"><stop offset="0" stop-color="#4a90e2"/><stop offset=".3" stop-color="#5a86e6"/><stop offset=".5" stop-color="#a957e6"/><stop offset=".68" stop-color="#e5788a"/><stop offset="1" stop-color="#f0583c"/></linearGradient>
<linearGradient id="gf" gradientUnits="userSpaceOnUse" x1="1079.2" y1="1112.3" x2="1106.8" y2="1199.7"><stop offset="0" stop-color="#deeaf8"/><stop offset=".25" stop-color="#e3e8f7"/><stop offset=".5" stop-color="#f1e3f3"/><stop offset=".75" stop-color="#fbe5e3"/><stop offset="1" stop-color="#fce7df"/></linearGradient>
<linearGradient id="gg" gradientUnits="userSpaceOnUse" x1="1035" y1="1147" x2="1058" y2="1166"><stop offset="0" stop-color="#4a8be6"/><stop offset=".5" stop-color="#b04fd8"/><stop offset="1" stop-color="#f2543c"/></linearGradient>
<filter id="gsh" x="-10%" y="-20%" width="120%" height="150%"><feGaussianBlur stdDeviation="1.6"/></filter></defs>
<rect x="1018" y="1135" width="150" height="46.500" rx="7" fill="#000" fill-opacity=".13" filter="url(#gsh)"/>
<rect x="1017.2" y="1132.5" width="151.2" height="47.300" rx="6.500" fill="url(#gf)" stroke="url(#gs)" stroke-width="1.5"/>
<path d="M1046.4 1148.7h-10.200v15.600h21.300v-5.100" fill="none" stroke="url(#gg)" stroke-width="2"/>
<path d="M1052.9 1147.3c.8 3.900 2.200 5.300 6.100 6.100c-3.900.8-5.300 2.200-6.100 6.100c-.8-3.900-2.200-5.300-6.100-6.100c3.900-.8 5.300-2.200 6.100-6.100z" fill="url(#gg)" stroke="url(#gg)" stroke-width=".8" stroke-linejoin="round"/></svg>
<span class="t" style="left:1064.36px;top:1145px;font-size:19px;line-height:23px;transform:scaleX(0.9899);">Ask Genie</span>
</div>
</body></html>
